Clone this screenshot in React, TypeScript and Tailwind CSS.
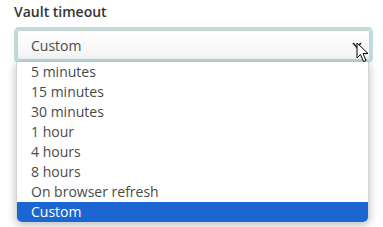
import React from 'react';

const options = [
  '5 minutes',
  '15 minutes',
  '30 minutes',
  '1 hour',
  '4 hours',
  '8 hours',
  'On browser refresh',
  'Custom',
];

function Cursor() {
  return (
    <svg
      className="absolute left-[356px] top-[42px]"
      width="16"
      height="22"
      viewBox="0 0 16 22"
    >
      <path
        d="M1 1 L1 16 L4.5 12.5 L7.5 19.5 L10 18.5 L7 11.5 L12 11.5 Z"
        fill="#fff"
        stroke="#000"
        strokeWidth="1"
        strokeLinejoin="round"
      />
    </svg>
  );
}

export default function App() {
  const selected = 'Custom';

  return (
    <div
      className="relative w-[383px] h-[227px] bg-white overflow-hidden"
      style={{ fontFamily: '"Open Sans", "Noto Sans", sans-serif' }}
    >
      <div className="pl-[14px] pr-[11px] pt-[2px]">
        <label className="block text-[14px] font-semibold text-[#333333] leading-[20px]">
          Vault timeout
        </label>
        <div className="mt-[5px] rounded-[5px] border-[3px] border-[#bddcdc] w-[359px]">
          <div className="flex items-center justify-between h-[30px] rounded-[3px] border border-[#c9d0d0] bg-gradient-to-b from-white to-[#f4f4f4] pl-[13px] pr-[7px]">
            <span className="text-[14px] text-[#4a4a4a]">{selected}</span>
            <svg width="10" height="7" viewBox="0 0 10 7">
              <path d="M1 1 L5 5.5 L9 1" fill="none" stroke="#333" strokeWidth="1.8" />
            </svg>
          </div>
        </div>
      </div>

      <ul className="absolute left-[16px] top-[62px] w-[353px] bg-white rounded-b-[6px] overflow-hidden border border-[#d4d4d4] border-t-0 shadow-[0_2px_10px_rgba(0,0,0,0.28)]">
        {options.map((o) => (
          <li
            key={o}
            className={
              o === selected
                ? 'h-[20px] leading-[20px] pl-[14px] text-[14px] bg-[#1b66d1] text-white'
                : 'h-[20px] leading-[20px] pl-[14px] text-[14px] text-[#4a4a4a]'
            }
          >
            {o}
          </li>
        ))}
      </ul>

      <Cursor />
    </div>
  );
}
